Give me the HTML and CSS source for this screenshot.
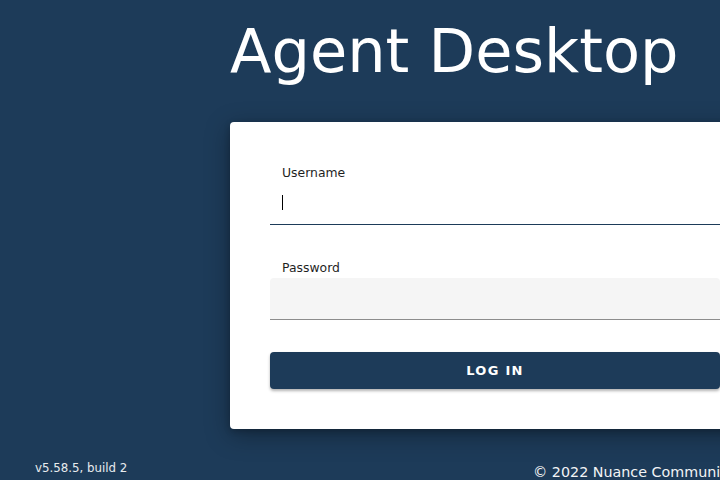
FILE: index.html
```html
<!DOCTYPE html>
<html lang="en">
<head>
<meta charset="utf-8">
<title>Agent Desktop</title>
<link rel="stylesheet" href="styles.css">
</head>
<body>
<div class="page">
  <main class="main">
    <h1 class="title">Agent Desktop</h1>
    <form class="card">
      <div class="field">
        <label class="label" for="username">Username</label>
        <div class="input-wrap">
          <input class="input input-focused" id="username" type="text">
          <span class="caret"></span>
        </div>
      </div>
      <div class="field field-second">
        <label class="label" for="password">Password</label>
        <div class="input-wrap">
          <input class="input input-filled" id="password" type="password">
        </div>
      </div>
      <button class="btn" type="button">Log in</button>
    </form>
  </main>
  <footer class="footer">
    <div class="version">v5.58.5, build 2</div>
    <div class="copyright">© 2022 Nuance Communications, Inc.</div>
  </footer>
</div>
</body>
</html>
```

FILE: styles.css
```css
html, body {
  margin: 0;
  padding: 0;
}

body {
  background: #1d3b59;
  font-family: "DejaVu Sans", "Noto Sans", sans-serif;
  overflow: hidden;
  width: 720px;
  height: 480px;
}

.page {
  display: flex;
  flex-direction: column;
  height: 480px;
}

.main {
  padding-left: 230px;
}

.title {
  margin: 16px 0 0;
  font-size: 60.6px;
  line-height: 70px;
  font-weight: normal;
  color: #ffffff;
  white-space: nowrap;
}

.card {
  margin-top: 36px;
  width: 530px;
  box-sizing: border-box;
  padding: 43px 40px 40px;
  background: #ffffff;
  border-radius: 4px;
  box-shadow: 0 6px 24px rgba(0, 0, 0, 0.35), 0 2px 6px rgba(0, 0, 0, 0.2);
  display: flex;
  flex-direction: column;
}

.field {
  display: flex;
  flex-direction: column;
}

.field-second {
  margin-top: 35px;
}

.label {
  display: block;
  font-size: 12.4px;
  line-height: 16px;
  padding-left: 12px;
  color: #1f1f1f;
}

.input-wrap {
  position: relative;
  margin-top: 2px;
}

.input {
  display: block;
  width: 100%;
  height: 42px;
  box-sizing: border-box;
  margin: 0;
  padding: 0 12px;
  border: 0;
  outline: none;
  font-family: inherit;
  font-size: 14px;
  background: transparent;
  caret-color: transparent;
}

.input-focused {
  background: #ffffff;
  border-bottom: 1px solid #1d3b59;
}

.input-filled {
  background: #f5f5f5;
  border-bottom: 1px solid #8c8c8c;
  border-radius: 4px 4px 0 0;
}

.caret {
  position: absolute;
  left: 12px;
  top: 12px;
  width: 1px;
  height: 15px;
  background: #000000;
}

.btn {
  margin-top: 32px;
  height: 37px;
  border: 0;
  border-radius: 4px;
  background: #1d3b59;
  color: #ffffff;
  font-family: inherit;
  font-size: 13px;
  font-weight: bold;
  letter-spacing: 1.3px;
  text-transform: uppercase;
  box-shadow: 0 2px 3px rgba(0, 0, 0, 0.3);
  cursor: pointer;
}

.footer {
  margin-top: auto;
  display: flex;
  align-items: flex-end;
  white-space: nowrap;
}

.version {
  width: 498px;
  padding-left: 35px;
  padding-bottom: 4px;
  font-size: 11.8px;
  line-height: 16px;
  color: #e8ebee;
  flex-shrink: 0;
}

.copyright {
  font-size: 14.3px;
  line-height: 16px;
  color: #f2f4f6;
}
```
